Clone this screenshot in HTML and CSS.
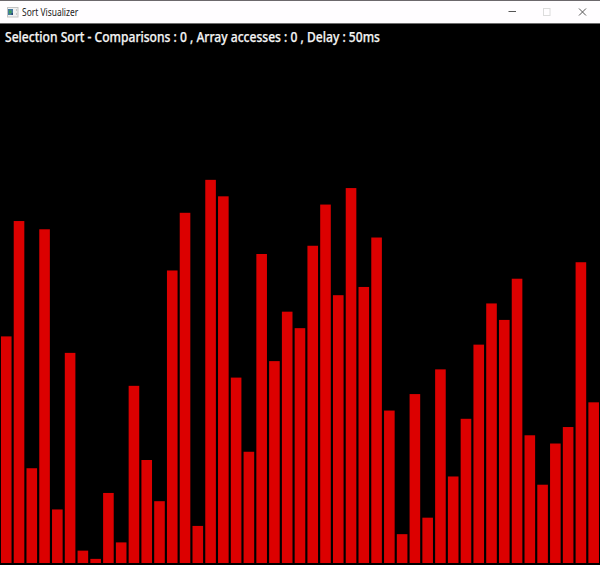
FILE: index.html
```html
<!DOCTYPE html>
<html lang="en">
<head>
<meta charset="utf-8">
<title>Sort Visualizer</title>
<link rel="stylesheet" href="styles.css">
</head>
<body>
<div class="window">
  <header class="titlebar">
    <svg class="app-icon" width="12" height="11" viewBox="0 0 12 11">
      <rect x="0.5" y="0.5" width="10.5" height="9.5" fill="#f1f1f1" stroke="#c3c3c3"/>
      <rect x="1" y="2" width="5" height="6" fill="#4579a0"/>
      <rect x="2" y="3.5" width="2.5" height="3" fill="#3d9e55"/>
      <rect x="4.5" y="6" width="1.5" height="2" fill="#29436f"/>
      <path d="M9.5 2v2M9.5 6v2" stroke="#c9c9c9"/>
    </svg>
    <h1 class="title">Sort Visualizer</h1>
    <div class="controls">
      <svg width="35" height="22" viewBox="0 0 35 22"><path d="M13.5 10.5h7.5" stroke="#555"/></svg>
      <svg width="35" height="22" viewBox="0 0 35 22"><rect x="13.5" y="7.5" width="6.5" height="7" fill="none" stroke="#dcdcdc"/></svg>
      <svg width="35" height="22" viewBox="0 0 35 22"><path d="M14 7.5l7 7M21 7.5l-7 7" stroke="#555" stroke-width="1"/></svg>
    </div>
  </header>
  <main class="stage">
    <p class="status">Selection Sort - Comparisons : 0 , Array accesses : 0 , Delay : 50ms</p>
    <svg class="chart" id="chart" width="600" height="400" viewBox="0 0 600 400"></svg>
  </main>
</div>
<script src="script.js"></script>
</body>
</html>
```
FILE: styles.css
```css
* {
  box-sizing: border-box;
}

body {
  margin: 0;
  background: #000;
}

.window {
  display: flex;
  flex-direction: column;
  width: 600px;
  height: 565px;
  overflow: hidden;
  background: #000;
}

.titlebar {
  display: flex;
  align-items: center;
  height: 24px;
  padding-left: 7px;
  background: #fffdff;
  border-top: 1px solid #6c686c;
  border-bottom: 1px solid #6c6c6c;
}

.app-icon {
  flex: none;
}

.title {
  margin: 0 0 0 2.5px;
  font: 400 10px/16px "Noto Sans", sans-serif;
  white-space: nowrap;
  color: #222;
  transform-origin: left center;
}

.controls svg,
.chart {
  display: block;
}

.controls {
  display: flex;
  margin-left: auto;
}

.stage {
  display: flex;
  flex: 1;
  flex-direction: column;
  justify-content: space-between;
  padding-bottom: 2px;
}

.status {
  align-self: flex-start;
  margin: 2px 0 0 4.5px;
  font: 500 14px/22px "Noto Sans", sans-serif;
  white-space: nowrap;
  color: #f4f4f4;
  -webkit-text-stroke: 0.25px #f4f4f4;
  transform-origin: left center;
}

.bar {
  fill: #dc0000;
}
```
FILE: script.js
```js
const values = [
  55, 83, 23, 81, 13, 51, 3, 1, 17, 5, 43, 25, 15, 71, 85, 9,
  93, 89, 45, 27, 75, 49, 61, 57, 77, 87, 65, 91, 67, 79, 37, 7,
  41, 11, 47, 21, 35, 53, 63, 59, 69, 31, 19, 29, 33, 73, 39
];
const pitch = 12.77;
const unit = 4.12;
const chart = document.getElementById("chart");

values.forEach((value, i) => {
  const bar = document.createElementNS("http://www.w3.org/2000/svg", "rect");
  bar.setAttribute("class", "bar");
  bar.setAttribute("x", 0.95 + i * pitch);
  bar.setAttribute("y", 400 - value * unit);
  bar.setAttribute("width", 10.6);
  bar.setAttribute("height", value * unit);
  chart.appendChild(bar);
});

// Condense a text line horizontally to a given width.
function fit(selector, width) {
  const el = document.querySelector(selector);
  el.style.transform = `scaleX(${width / el.offsetWidth})`;
}

fit(".status", 375);
fit(".title", 56.5);
```
